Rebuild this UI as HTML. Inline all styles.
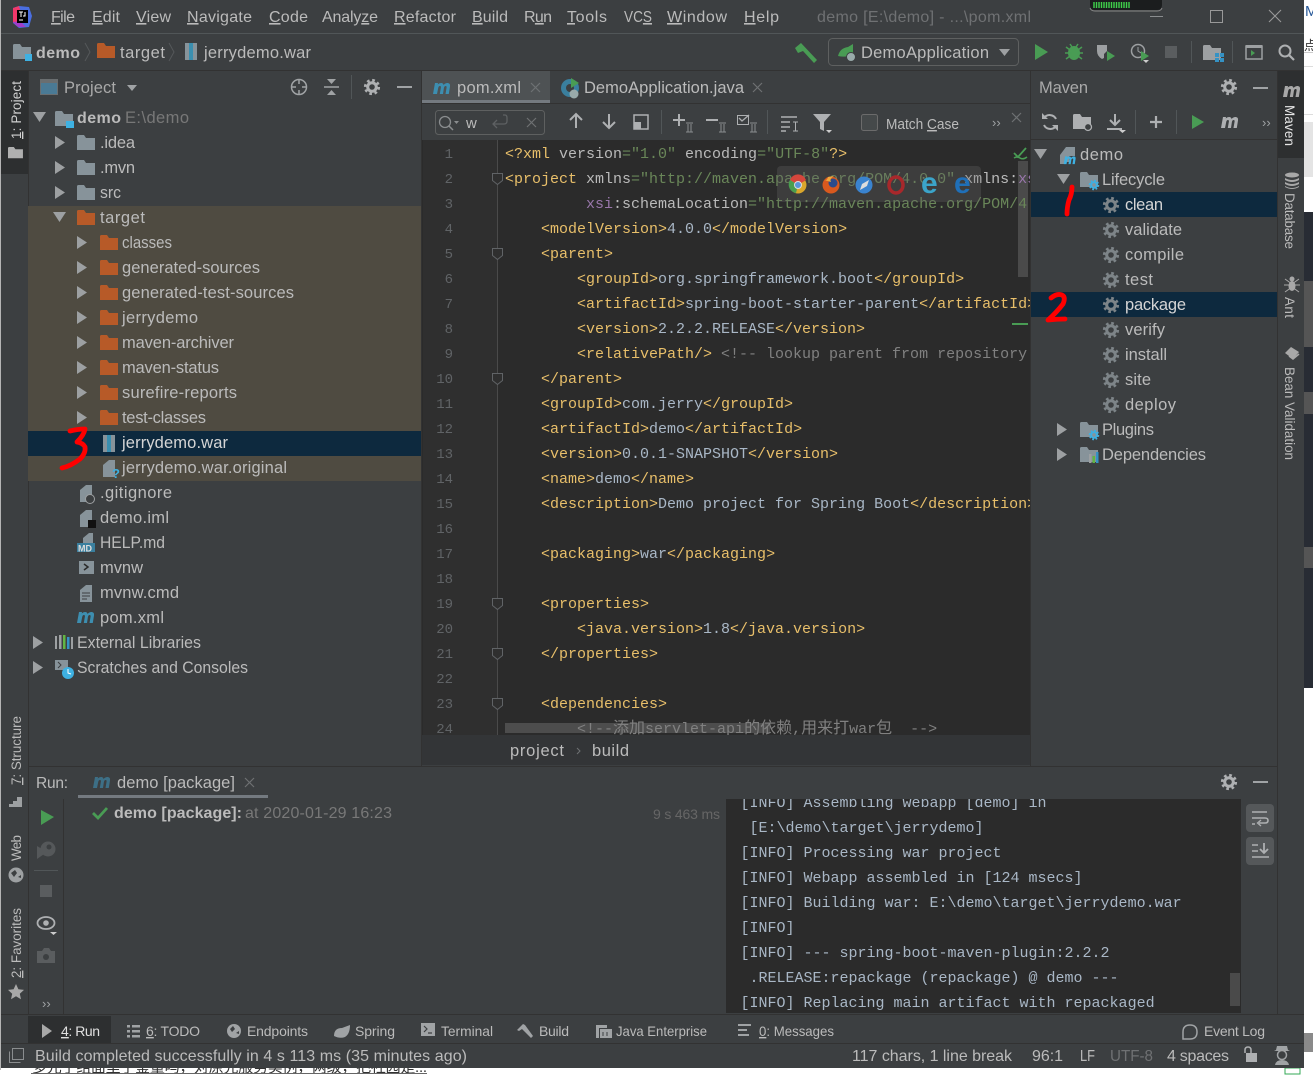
<!DOCTYPE html>
<html><head><meta charset="utf-8"><title>demo pom.xml</title>
<style>
html,body{margin:0;padding:0;background:#fff;width:1313px;height:1075px;overflow:hidden}
svg{display:block}
text{font-family:"Liberation Sans","Noto Sans CJK SC",sans-serif;fill:#bbb;font-size:16.5px;white-space:pre}
.m text,text.m{font-size:16px}
.b text{font-size:14px}
.s text{font-size:16px}
.c text{font-family:"Liberation Mono","Noto Sans CJK SC",monospace;font-size:15px;fill:#a9b7c6}
.n text{font-family:"Liberation Mono",monospace;font-size:14px;fill:#606366;text-anchor:end}
.v text{font-size:13.4px}
.tg,.c text.tg{fill:#e8bf6a}.at{fill:#bababa}.st{fill:#6a8759}.cm,.c text.cm{fill:#808080}.ns{fill:#9876aa}
.z{font-size:16px}
.u{text-decoration:underline}
</style></head><body>
<svg width="1313" height="1075" viewBox="0 0 1313 1075" xmlns="http://www.w3.org/2000/svg">
<defs>
<path id="fo" d="M0 1.5q0-1.500 1.500-1.500h5.500l2 3h9v12h-18z"/>
<g id="gear"><circle r="4.300" fill="none" stroke="currentColor" stroke-width="3"/><circle r="6.600" fill="none" stroke="currentColor" stroke-width="3" stroke-dasharray="2.600 2.580"/></g>
<path id="tr" d="M0 0L10 6.500L0 13z" fill="#9da0a2"/>
<path id="td" d="M0 0h13L6.500 10z" fill="#9da0a2"/>
<path id="mm" d="M1 13L3 2h3l-.3 1.500Q7.500 1.700 9.500 2q1.800.3 2 2 2-2.200 4.300-2 2.700.3 2.200 3.500L16.800 13h-3.300l1.100-6.500q.2-1.500-1-1.500-1.300 0-1.700 2L11 13H7.800l1.100-6.500q.2-1.500-1-1.500-1.300 0-1.700 2L5 13z"/>
<path id="x" d="M0 0L9 9M9 0L0 9" fill="none" stroke="currentColor" stroke-width="1.200"/>
<clipPath id="cc"><rect x="498" y="140" width="532" height="595"/></clipPath>
<clipPath id="cn"><rect x="423" y="140" width="60" height="595"/></clipPath>
<clipPath id="co"><rect x="726" y="799" width="503" height="214"/></clipPath>
</defs>

<!-- background behind the window -->
<rect width="1313" height="1075" fill="#fff"/>
<rect x="1304" y="52" width="9" height="1" fill="#ccc"/>
<rect x="1304" y="66" width="9" height="1" fill="#ddd"/>
<rect x="1304" y="114" width="9" height="1" fill="#ddd"/>
<rect x="1304" y="122" width="9" height="55" fill="#e4e4e4"/>
<rect x="1304" y="212" width="9" height="476" fill="#282c34"/>
<rect x="1304" y="281" width="9" height="66" fill="#555"/>
<rect x="1304" y="392" width="9" height="22" fill="#555"/>
<rect x="1304" y="547" width="9" height="21" fill="#555"/>
<rect x="1304" y="1033" width="9" height="19" fill="#8a8a8a"/>
<text x="1305" y="16" style="font-size:15px;fill:#2a5a9a">M</text>
<text x="1304" y="50" style="font-size:13px;fill:#333">点</text>
<text x="32" y="1072" textLength="395" style="font-size:15px;fill:#333">多元了组面里子鉴量吗，对原先服务实例，两级，把社园是...</text>
<rect x="31" y="1073" width="396" height="1" fill="#666"/>
<rect x="1285" y="1068" width="15" height="6" fill="none" stroke="#3a5" stroke-width="1"/>

<!-- window -->
<rect x="0" y="0" width="1" height="1070" fill="#b5b5b5"/>
<rect x="1" y="0" width="1303" height="1068" fill="#3c3f41"/>
<rect x="1" y="33" width="1303" height="1" fill="#515658"/>
<rect x="1" y="70" width="1303" height="1" fill="#323232"/>
<rect x="28" y="71" width="1" height="943" fill="#323232"/>
<rect x="1277" y="71" width="1" height="943" fill="#323232"/>

<!-- logo -->
<path d="M13 8l6-2 10 1 3 9-3 11-10 1-6-5z" fill="#4a6ee0"/>
<path d="M13 8l6-2 3 10-6 9-3-3z" fill="#f0386b"/>
<path d="M13 22l5 5h8l-6-6z" fill="#a03cc8"/>
<rect x="17" y="10" width="11" height="13" fill="#000"/>
<path d="M19 12h4M21 12v5M25 12v4h-2M19 20h4" stroke="#fff" stroke-width="1" fill="none"/>

<!-- menu -->
<g class="m">
<text x="51" y="22" textLength="24"><tspan class="u">F</tspan>ile</text>
<text x="92" y="22" textLength="28"><tspan class="u">E</tspan>dit</text>
<text x="136" y="22" textLength="35"><tspan class="u">V</tspan>iew</text>
<text x="187" y="22" textLength="65"><tspan class="u">N</tspan>avigate</text>
<text x="269" y="22" textLength="39"><tspan class="u">C</tspan>ode</text>
<text x="322" y="22" textLength="56">Analy<tspan class="u">z</tspan>e</text>
<text x="394" y="22" textLength="62"><tspan class="u">R</tspan>efactor</text>
<text x="472" y="22" textLength="36"><tspan class="u">B</tspan>uild</text>
<text x="524" y="22" textLength="28">R<tspan class="u">u</tspan>n</text>
<text x="567" y="22" textLength="40"><tspan class="u">T</tspan>ools</text>
<text x="624" y="22" textLength="28" lengthAdjust="spacingAndGlyphs">VC<tspan class="u">S</tspan></text>
<text x="667" y="22" textLength="60"><tspan class="u">W</tspan>indow</text>
<text x="744" y="22" textLength="35"><tspan class="u">H</tspan>elp</text>
<text x="817" y="22" textLength="214" style="fill:#6f7173">demo [E:\demo] - ...\pom.xml</text>
</g>
<!-- window controls -->
<path d="M1090 0h72v5q0 5-5 5h-62q-5 0-5-5z" fill="#1b1d1e"/>
<path d="M1090 8q1 3 5 3h62q4 0 5-3" fill="none" stroke="#888" stroke-width="1"/>
<path d="M1094 2v6M1096.500 2v6M1099 2v6M1101.500 2v6M1104 2v6M1106.500 2v6M1109 2v6M1111.500 2v6M1114 2v6M1116.500 2v6M1119 2v6M1121.500 2v6M1124 2v6M1126.500 2v6M1129 2v6" stroke="#3fd14b" stroke-width="1.400"/>
<rect x="1150" y="16" width="13" height="1" fill="#8a8d8f"/>
<rect x="1210.500" y="10.500" width="12" height="12" fill="none" stroke="#999" stroke-width="1"/>
<path d="M1269 10l12 12M1281 10l-12 12" stroke="#999" stroke-width="1.100"/>

<!-- nav bar -->
<use href="#fo" x="13" y="44" fill="#87939a"/>
<rect x="25" y="54" width="7" height="7" fill="#3eb1e2"/>
<text x="36" y="58" textLength="44" style="font-weight:700;font-size:16px">demo</text>
<path d="M85 43l5 9-5 9" fill="none" stroke="#55585a"/>
<use href="#fo" x="97" y="43" fill="#b75a28"/>
<text x="120" y="58" textLength="45">target</text>
<path d="M169 43l5 9-5 9" fill="none" stroke="#55585a"/>
<rect x="185" y="43" width="12" height="17" fill="#87939a"/><rect x="189" y="43" width="4" height="17" fill="#3a8fb0"/>
<text x="204" y="58" textLength="107">jerrydemo.war</text>

<!-- top toolbar -->
<path d="M795 48l6-5 16 17-3 3-11-12-5 2z" fill="#499c54"/>
<rect x="828.500" y="38.500" width="190" height="27" rx="4" fill="none" stroke="#5e6060"/>
<path d="M838 56q2-8 10-9l5-3v10q-6 4-15 2z" fill="#499c54"/><circle cx="851" cy="57" r="4.500" fill="#9aa" stroke="#3c3f41"/>
<text x="861" y="58" textLength="128">DemoApplication</text>
<path d="M999 49h11l-5.500 7z" fill="#9da0a2"/>
<path d="M1035 44l13 8-13 8z" fill="#499c54"/>
<ellipse cx="1074" cy="53" rx="6" ry="7" fill="#499c54"/><path d="M1066 47l16 12M1082 47l-16 12M1065 53h18M1070 44l2 3M1078 44l-2 3" stroke="#499c54" stroke-width="1.500"/>
<path d="M1097 45h10v6l-3 3v4l-2 1q-5-3-5-8z" fill="#9da0a2"/><path d="M1107 51l8 5-8 5z" fill="#499c54"/>
<circle cx="1138" cy="51" r="6.500" fill="none" stroke="#9da0a2" stroke-width="1.500"/><path d="M1138 47v4l3 2" stroke="#9da0a2" fill="none"/><path d="M1141 51l8 5-8 5z" fill="#499c54"/><path d="M1143 60h6l-3 3z" fill="#ccc"/>
<rect x="1165" y="46" width="12" height="12" fill="#5a5d5f"/>
<rect x="1191" y="41" width="1" height="22" fill="#515658"/>
<rect x="1232" y="41" width="1" height="22" fill="#515658"/>
<use href="#fo" x="1203" y="45" fill="#9da0a2"/><path d="M1215 53h4v4h-4zM1220 53h4v4h-4zM1215 58h4v4h-4zM1220 58h4v4h-4z" fill="#3592c4"/>
<rect x="1246" y="46" width="16" height="13" fill="none" stroke="#9da0a2" stroke-width="1.500"/><rect x="1246" y="45" width="16" height="3" fill="#9da0a2"/><path d="M1251 50l4 3-4 3z" fill="#499c54"/>
<circle cx="1285" cy="51" r="5.500" fill="none" stroke="#aeb0b2" stroke-width="2"/><path d="M1289 55l5 5" stroke="#aeb0b2" stroke-width="2.200"/>

<!-- left stripe -->
<rect x="1" y="71" width="27" height="103" fill="#2d2f30"/>
<g class="v">
<text transform="translate(21,139) rotate(-90)" textLength="58" style="fill:#d0d0d0"><tspan class="u">1</tspan>: Project</text>
<text transform="translate(21,785) rotate(-90)" textLength="69"><tspan class="u">7</tspan>: Structure</text>
<text transform="translate(21,861) rotate(-90)" textLength="26">Web</text>
<text transform="translate(21,978) rotate(-90)" textLength="70"><tspan class="u">2</tspan>: Favorites</text>
</g>
<use href="#fo" fill="#b0b0b0" transform="translate(8 147) scale(.83 .75)"/>
<path d="M9 807v-3h4v-3h4v-4h5v10z" fill="#9da0a2"/>
<circle cx="16" cy="875" r="7.500" fill="#9da0a2"/><path d="M11 873l4-3 2 3-3 4zM18 877l3-2v3z" fill="#3c3f41"/>
<path d="M16 984l2.400 5.300 5.600.6-4.200 3.800 1.200 5.500-5-2.900-5 2.900 1.200-5.500-4.200-3.800 5.600-.6z" fill="#a8a8a8"/>

<!-- project panel -->
<rect x="40.500" y="79.500" width="17" height="15" fill="#4a7a95" stroke="#6a6e70"/><rect x="41" y="80" width="16" height="3" fill="#6a6e70"/>
<text x="64" y="93" textLength="52" style="fill:#a9a9a9">Project</text>
<path d="M127 85h10l-5 6z" fill="#a0a3a5"/>
<circle cx="299" cy="87" r="7.500" fill="none" stroke="#a0a3a5" stroke-width="1.500"/><path d="M299 79v5M299 90v5M291 87h5M302 87h5" stroke="#a0a3a5" stroke-width="1.500"/>
<path d="M324 87h15" stroke="#a0a3a5" stroke-width="1.500"/><path d="M327 79h9l-4.500 5zM327 95h9l-4.500-5z" fill="#a0a3a5"/>
<rect x="351" y="75" width="1" height="24" fill="#515658"/>
<use href="#gear" x="372" y="87" color="#aeb0b2"/>
<rect x="397" y="86" width="15" height="2" fill="#a0a3a5"/>

<!-- highlights -->
<rect x="28" y="206" width="393" height="225" fill="#4f4b41"/>
<rect x="28" y="456" width="393" height="25" fill="#4f4b41"/>
<rect x="28" y="431" width="393" height="25" fill="#0d293e"/>

<!-- tree arrows -->
<use href="#td" x="33" y="112"/>
<use href="#tr" x="55" y="136"/><use href="#tr" x="55" y="161"/><use href="#tr" x="55" y="186"/>
<use href="#td" x="53" y="212"/>
<use href="#tr" x="77" y="236"/><use href="#tr" x="77" y="261"/><use href="#tr" x="77" y="286"/><use href="#tr" x="77" y="311"/><use href="#tr" x="77" y="336"/><use href="#tr" x="77" y="361"/><use href="#tr" x="77" y="386"/><use href="#tr" x="77" y="411"/>
<use href="#tr" x="33" y="636"/><use href="#tr" x="33" y="661"/>

<!-- tree icons -->
<use href="#fo" x="55" y="111" fill="#87939a"/><rect x="66" y="121" width="8" height="7" fill="#3eb1e2"/>
<use href="#fo" x="77" y="135" fill="#87939a"/><use href="#fo" x="77" y="160" fill="#87939a"/><use href="#fo" x="77" y="185" fill="#87939a"/>
<use href="#fo" x="77" y="210" fill="#b75a28"/>
<g fill="#b75a28"><use href="#fo" x="100" y="235"/><use href="#fo" x="100" y="260"/><use href="#fo" x="100" y="285"/><use href="#fo" x="100" y="310"/><use href="#fo" x="100" y="335"/><use href="#fo" x="100" y="360"/><use href="#fo" x="100" y="385"/><use href="#fo" x="100" y="410"/></g>
<rect x="103" y="435" width="12" height="17" fill="#87939a"/><rect x="107" y="435" width="4" height="17" fill="#3a8fb0"/>
<path d="M103 465l6-5h6v17h-12z" fill="#87939a"/>
<text x="112" y="478" style="font-weight:700;fill:#3eb1e2;font-size:13px">?</text>
<path d="M80 490l6-5h6v17h-12z" fill="#87939a"/><circle cx="90" cy="499" r="4.500" fill="#3c3f41" stroke="#9da0a2"/>
<path d="M80 515l6-5h6v17h-12z" fill="#87939a"/><rect x="88" y="520" width="8" height="8" fill="#111"/>
<path d="M83 538l6-5h4v10h-10z" fill="#87939a"/><rect x="77" y="543" width="18" height="9" fill="#3a7f9e"/>
<text x="78" y="551.500" style="font-size:9px;font-weight:700;fill:#ddd">MD</text>
<rect x="79" y="561" width="15" height="13" fill="#87939a"/><path d="M84 564l4 3-4 3" fill="none" stroke="#2b2b2b" stroke-width="1.500"/>
<path d="M80 590l6-5h6v17h-12z" fill="#87939a"/><path d="M82 593h8M82 596h8M82 599h5" stroke="#3c3f41"/>
<use href="#mm" x="76" y="610" fill="#3d8eb0"/>
<path d="M55 636h2v13h-2z" fill="#9da0a2"/><path d="M59 635h2.500v14H59z" fill="#9da0a2"/><path d="M63 635h2.500v14H63z" fill="#62b543"/><path d="M67 637h2.500v12H67z" fill="#3592c4"/><path d="M71 637h2v12h-2z" fill="#9da0a2"/>
<path d="M55 660h13v10H55z" fill="#87939a"/><path d="M58 662l3 3-3 3" fill="none" stroke="#3c3f41"/><circle cx="68" cy="673" r="6" fill="#3eb1e2"/><path d="M68 669v4l3 1" stroke="#fff" fill="none"/>

<!-- tree labels -->
<g>
<text x="77" y="123" textLength="44" style="font-weight:700;font-size:16px">demo</text><text x="125" y="123" textLength="64" style="fill:#787878">E:\demo</text>
<text x="100" y="148" textLength="35">.idea</text><text x="100" y="173" textLength="35">.mvn</text><text x="100" y="198" textLength="21" lengthAdjust="spacingAndGlyphs">src</text><text x="100" y="223" textLength="45">target</text>
<text x="122" y="248" textLength="50" lengthAdjust="spacingAndGlyphs">classes</text><text x="122" y="273" textLength="138">generated-sources</text><text x="122" y="298" textLength="172">generated-test-sources</text><text x="122" y="323" textLength="76">jerrydemo</text><text x="122" y="348" textLength="112">maven-archiver</text><text x="122" y="373" textLength="97">maven-status</text><text x="122" y="398" textLength="115">surefire-reports</text><text x="122" y="423" textLength="84">test-classes</text>
<text x="122" y="448" textLength="106" style="fill:#d5d5d5">jerrydemo.war</text><text x="122" y="473" textLength="165">jerrydemo.war.original</text>
<text x="100" y="498" textLength="72">.gitignore</text><text x="100" y="523" textLength="69">demo.iml</text><text x="100" y="548" textLength="65" lengthAdjust="spacingAndGlyphs">HELP.md</text><text x="100" y="573" textLength="43">mvnw</text><text x="100" y="598" textLength="79">mvnw.cmd</text><text x="100" y="623" textLength="64">pom.xml</text>
<text x="77" y="648" textLength="124" lengthAdjust="spacingAndGlyphs">External Libraries</text><text x="77" y="673" textLength="171" lengthAdjust="spacingAndGlyphs">Scratches and Consoles</text>
</g>

<!-- editor tabs -->
<rect x="421" y="71" width="1" height="695" fill="#323232"/>
<rect x="1030" y="71" width="1" height="695" fill="#323232"/>
<rect x="422" y="71" width="128" height="33" fill="#4e5254"/>
<rect x="422" y="100" width="128" height="4" fill="#747a80"/>
<rect x="422" y="103" width="608" height="1" fill="#323232"/>
<use href="#mm" x="432" y="81" fill="#3d8eb0"/>
<text x="457" y="93" textLength="64">pom.xml</text>
<use href="#x" x="531" y="83" color="#6e7173"/>
<circle cx="570" cy="88" r="9" fill="#3a7f9e"/><circle cx="570" cy="88" r="4" fill="#3c3f41"/><path d="M571 78l8 5-8 5z" fill="#499c54"/><circle cx="574" cy="94" r="4.500" fill="#9aa"/>
<text x="584" y="93" textLength="160">DemoApplication.java</text>
<use href="#x" x="753" y="83" color="#6e7173"/>

<!-- find bar -->
<rect x="422" y="104" width="608" height="36" fill="#3c3f41"/>
<rect x="435.500" y="110.500" width="109" height="24" rx="3" fill="none" stroke="#5e6060"/>
<circle cx="445" cy="122" r="5.500" fill="none" stroke="#8a8d8f" stroke-width="1.300"/><path d="M449 126l4 4" stroke="#8a8d8f" stroke-width="1.500"/><path d="M454 121h5l-2.500 3z" fill="#8a8d8f"/>
<text x="466" y="128" style="font-size:15px">w</text>
<path d="M503 115h2q2 0 2 3v3q0 3-3 3h-10M497 120l-4 4 4 4" fill="none" stroke="#5e6163" stroke-width="1.300"/>
<use href="#x" x="527" y="118" color="#6e7173"/>
<path d="M576 128v-14M570 120l6-6 6 6" fill="none" stroke="#aeb0b2" stroke-width="2"/>
<path d="M609 114v14M603 122l6 6 6-6" fill="none" stroke="#aeb0b2" stroke-width="2"/>
<rect x="634" y="115" width="14" height="14" fill="none" stroke="#aeb0b2" stroke-width="1.500"/><rect x="634" y="122" width="7" height="7" fill="#aeb0b2"/>
<rect x="661" y="110" width="1" height="24" fill="#515658"/><rect x="767" y="110" width="1" height="24" fill="#515658"/>
<path d="M673 120h12M679 114v12" stroke="#aeb0b2" stroke-width="2"/><path d="M686 123h7M686 132h7M688 124v8M691 124v8" stroke="#8a8d8f"/>
<path d="M706 120h12" stroke="#aeb0b2" stroke-width="2"/><path d="M719 123h7M719 132h7M721 124v8M724 124v8" stroke="#8a8d8f"/>
<rect x="737.500" y="115.500" width="11" height="9" fill="none" stroke="#aeb0b2"/><path d="M739 118l3 3 7-6" fill="none" stroke="#aeb0b2" stroke-width="1.300"/><path d="M750 123h7M750 132h7M752 124v8M755 124v8" stroke="#8a8d8f"/>
<path d="M781 117h16M781 122h9M781 127h9M781 131h5" stroke="#aeb0b2" stroke-width="1.500"/><path d="M793 122h5M795.500 122v9M793 131h5" stroke="#aeb0b2"/>
<path d="M813 114h18l-7 8v9l-4-2v-7z" fill="#aeb0b2"/><path d="M826 130h6l-3 3z" fill="#ccc"/>
<rect x="861.500" y="114.500" width="16" height="16" rx="2" fill="#45494a" stroke="#6b6b6b"/>
<text x="886" y="129" textLength="73" lengthAdjust="spacingAndGlyphs" style="font-size:14.500px">Match <tspan class="u">C</tspan>ase</text>
<text x="992" y="127" style="font-size:13px;fill:#a0a3a5">››</text>
<use href="#x" x="1012" y="113" color="#6e7173"/>

<!-- editor -->
<rect x="422" y="140" width="608" height="595" fill="#2b2b2b"/>
<rect x="423" y="140" width="74" height="595" fill="#2f2f2f"/>
<rect x="497" y="140" width="1" height="595" fill="#4a4a4a"/>
<rect x="1018" y="161" width="10" height="116" fill="#4a4a4a"/>
<rect x="505" y="723" width="265" height="10" fill="#4d4d4d"/>
<g class="n" clip-path="url(#cn)">
<text x="453" y="158">1</text><text x="453" y="183">2</text><text x="453" y="208">3</text><text x="453" y="233">4</text><text x="453" y="258">5</text><text x="453" y="283">6</text><text x="453" y="308">7</text><text x="453" y="333">8</text><text x="453" y="358">9</text><text x="453" y="383">10</text><text x="453" y="408">11</text><text x="453" y="433">12</text><text x="453" y="458">13</text><text x="453" y="483">14</text><text x="453" y="508">15</text><text x="453" y="533">16</text><text x="453" y="558">17</text><text x="453" y="583">18</text><text x="453" y="608">19</text><text x="453" y="633">20</text><text x="453" y="658">21</text><text x="453" y="683">22</text><text x="453" y="708">23</text><text x="453" y="733">24</text>
</g>
<g fill="#2f2f2f" stroke="#606366">
<path d="M492.500 173.500h10v7l-5 4-5-4z"/><path d="M492.500 248.500h10v7l-5 4-5-4z"/><path d="M492.500 373.500h10v7l-5 4-5-4z"/><path d="M492.500 598.500h10v7l-5 4-5-4z"/><path d="M492.500 648.500h10v7l-5 4-5-4z"/><path d="M492.500 698.500h10v7l-5 4-5-4z"/>
</g>
<g class="c" clip-path="url(#cc)">
<text x="505" y="158"><tspan class="tg">&lt;?xml </tspan><tspan class="at">version</tspan><tspan class="st">="1.0" </tspan><tspan class="at">encoding</tspan><tspan class="st">="UTF-8"</tspan><tspan class="tg">?&gt;</tspan></text>
<text x="505" y="183"><tspan class="tg">&lt;project </tspan><tspan class="at">xmlns</tspan><tspan class="st">="http://maven.apache.org/POM/4.0.0" </tspan><tspan class="at">xmlns:</tspan><tspan class="ns">xsi</tspan></text>
<text x="586" y="208"><tspan class="ns">xsi</tspan><tspan class="at">:schemaLocation</tspan><tspan class="st">="http://maven.apache.org/POM/4.0.0</tspan></text>
<text x="541" y="233"><tspan class="tg">&lt;modelVersion&gt;</tspan>4.0.0<tspan class="tg">&lt;/modelVersion&gt;</tspan></text>
<text x="541" y="258" class="tg">&lt;parent&gt;</text>
<text x="577" y="283"><tspan class="tg">&lt;groupId&gt;</tspan>org.springframework.boot<tspan class="tg">&lt;/groupId&gt;</tspan></text>
<text x="577" y="308"><tspan class="tg">&lt;artifactId&gt;</tspan>spring-boot-starter-parent<tspan class="tg">&lt;/artifactId&gt;</tspan></text>
<text x="577" y="333"><tspan class="tg">&lt;version&gt;</tspan>2.2.2.RELEASE<tspan class="tg">&lt;/version&gt;</tspan></text>
<text x="577" y="358"><tspan class="tg">&lt;relativePath/&gt; </tspan><tspan class="cm">&lt;!-- lookup parent from repository --&gt;</tspan></text>
<text x="541" y="383" class="tg">&lt;/parent&gt;</text>
<text x="541" y="408"><tspan class="tg">&lt;groupId&gt;</tspan>com.jerry<tspan class="tg">&lt;/groupId&gt;</tspan></text>
<text x="541" y="433"><tspan class="tg">&lt;artifactId&gt;</tspan>demo<tspan class="tg">&lt;/artifactId&gt;</tspan></text>
<text x="541" y="458"><tspan class="tg">&lt;version&gt;</tspan>0.0.1-SNAPSHOT<tspan class="tg">&lt;/version&gt;</tspan></text>
<text x="541" y="483"><tspan class="tg">&lt;name&gt;</tspan>demo<tspan class="tg">&lt;/name&gt;</tspan></text>
<text x="541" y="508"><tspan class="tg">&lt;description&gt;</tspan>Demo project for Spring Boot<tspan class="tg">&lt;/description&gt;</tspan></text>
<text x="541" y="558"><tspan class="tg">&lt;packaging&gt;</tspan>war<tspan class="tg">&lt;/packaging&gt;</tspan></text>
<text x="541" y="608" class="tg">&lt;properties&gt;</text>
<text x="577" y="633"><tspan class="tg">&lt;java.version&gt;</tspan>1.8<tspan class="tg">&lt;/java.version&gt;</tspan></text>
<text x="541" y="658" class="tg">&lt;/properties&gt;</text>
<text x="541" y="708" class="tg">&lt;dependencies&gt;</text>
<text x="577" y="733" class="cm">&lt;!--<tspan class="z">添加</tspan>servlet-api<tspan class="z">的依赖</tspan>,<tspan class="z">用来打</tspan>war<tspan class="z">包</tspan>  --&gt;</text>
</g>
<path d="M1014 153l4 4 8-9" fill="none" stroke="#499c54" stroke-width="1.800"/><path d="M1014 158q3-2 6 0t7-1" fill="none" stroke="#499c54" stroke-width="1.500"/>
<rect x="1012" y="323" width="16" height="2" fill="#499c54"/>

<!-- browser bubble -->
<rect x="777" y="166" width="204" height="36" rx="4" fill="#666" fill-opacity=".3"/>
<circle cx="798" cy="185" r="8.500" fill="#d9a62c"/><path d="M798 185L790 180A8.500 8.500 0 0 1 806 180z" fill="#d5463c"/><path d="M798 185l-8-5a8.500 8.500 0 0 0 6 13z" fill="#4a9e4f"/><circle cx="798" cy="185" r="3.500" fill="#5a95d8" stroke="#ddd"/>
<circle cx="831" cy="185" r="8.500" fill="#d9591e"/><circle cx="833" cy="183" r="4.500" fill="#2b4b8c"/><path d="M824 180q3 1 4-3l6-1q-5 3-3 6z" fill="#eea83c"/>
<circle cx="864" cy="185" r="8.500" fill="#3a83cf"/><path d="M869 180l-7 4-2 6 7-4z" fill="#ddd"/>
<ellipse cx="896" cy="185" rx="7" ry="8" fill="none" stroke="#a8282b" stroke-width="3.500"/>
<text x="921" y="193" style="font-size:30px;font-weight:700;fill:#3ba4c9">e</text>
<text x="954" y="193" style="font-size:30px;font-weight:700;fill:#1f6fb8">e</text>

<!-- breadcrumbs -->
<rect x="422" y="735" width="608" height="30" fill="#333537"/>
<text x="510" y="756" textLength="54">project</text>
<path d="M577 748l3 3-3 3" fill="none" stroke="#6e7173"/>
<text x="592" y="756" textLength="37">build</text>

<!-- maven panel -->
<text x="1039" y="93" textLength="49" style="fill:#a9a9a9">Maven</text>
<use href="#gear" x="1229" y="87" color="#aeb0b2"/>
<rect x="1253" y="87" width="15" height="2" fill="#a0a3a5"/>
<rect x="1031" y="139" width="246" height="1" fill="#323232"/>
<path d="M1056 119a7 7 0 0 0-12-1M1044 125a7 7 0 0 0 12 1" fill="none" stroke="#aeb0b2" stroke-width="2"/><path d="M1042 113v6h6zM1058 131v-6h-6z" fill="#aeb0b2"/>
<use href="#fo" x="1073" y="114" fill="#aeb0b2"/><circle cx="1088" cy="127" r="3.500" fill="#3c3f41" stroke="#aeb0b2" stroke-width="1.300"/>
<path d="M1115 114v11M1110 120l5 5 5-5" fill="none" stroke="#aeb0b2" stroke-width="2"/><path d="M1107 129h15" stroke="#aeb0b2" stroke-width="2"/><path d="M1119 130h7l-3.500 3z" fill="#ccc"/>
<rect x="1135" y="110" width="1" height="24" fill="#515658"/><rect x="1176" y="110" width="1" height="24" fill="#515658"/>
<path d="M1150 122h12M1156 116v12" stroke="#aeb0b2" stroke-width="2.200"/>
<path d="M1192 115l12 7-12 7z" fill="#499c54"/>
<use href="#mm" x="1220" y="115" fill="#aeb0b2"/>
<text x="1262" y="127" style="font-size:13px;fill:#a0a3a5">››</text>

<rect x="1031" y="192" width="246" height="25" fill="#0d293e"/>
<rect x="1031" y="292" width="246" height="25" fill="#0d293e"/>
<use href="#td" x="1034" y="149"/>
<use href="#td" x="1057" y="174"/>
<use href="#tr" x="1057" y="423"/><use href="#tr" x="1057" y="448"/>
<path d="M1060 155l6-8h9v9h-6v6h-3v2h-6z" fill="#87939a"/><use href="#mm" fill="#3eb1e2" transform="translate(1063 155) scale(.7)"/>
<use href="#fo" x="1080" y="172" fill="#87939a"/><use href="#gear" transform="translate(1094 185) scale(.65)" color="#3eb1e2"/>
<use href="#fo" x="1080" y="422" fill="#87939a"/><use href="#gear" transform="translate(1094 435) scale(.65)" color="#3eb1e2"/>
<use href="#fo" x="1080" y="447" fill="#87939a"/><path d="M1089 454h2.500v9H1089z" fill="#9da0a2"/><path d="M1092.500 456h2.500v7h-2.500z" fill="#62b543"/><path d="M1096 452h2.500v11H1096z" fill="#3592c4"/>
<g color="#7d8488"><use href="#gear" x="1111" y="205"/><use href="#gear" x="1111" y="230"/><use href="#gear" x="1111" y="255"/><use href="#gear" x="1111" y="280"/><use href="#gear" x="1111" y="305"/><use href="#gear" x="1111" y="330"/><use href="#gear" x="1111" y="355"/><use href="#gear" x="1111" y="380"/><use href="#gear" x="1111" y="405"/></g>
<text x="1080" y="160" textLength="43">demo</text><text x="1102" y="185" textLength="63">Lifecycle</text>
<text x="1125" y="210" textLength="38" style="fill:#d5d5d5">clean</text><text x="1125" y="235" textLength="57">validate</text><text x="1125" y="260" textLength="59">compile</text><text x="1125" y="285" textLength="28">test</text><text x="1125" y="310" textLength="61" style="fill:#d5d5d5">package</text><text x="1125" y="335" textLength="40">verify</text><text x="1125" y="360" textLength="42">install</text><text x="1125" y="385" textLength="26">site</text><text x="1125" y="410" textLength="51">deploy</text>
<text x="1102" y="435" textLength="52">Plugins</text><text x="1102" y="460" textLength="104">Dependencies</text>

<!-- right stripe -->
<rect x="1278" y="71" width="26" height="87" fill="#2d2f30"/>
<use href="#mm" x="1282" y="84" fill="#a8a8a8"/>
<g class="v">
<text transform="translate(1285,105) rotate(90)" textLength="41" style="fill:#e6e6e6">Maven</text>
<text transform="translate(1285,193) rotate(90)" textLength="56">Database</text>
<text transform="translate(1285,297) rotate(90)" textLength="21">Ant</text>
<text transform="translate(1285,367) rotate(90)" textLength="93">Bean Validation</text>
</g>
<ellipse cx="1292" cy="175" rx="7" ry="2.500" fill="#a8a8a8"/><path d="M1285 178q7 4 14 0v2q-7 4-14 0zM1285 182q7 4 14 0v2q-7 4-14 0zM1285 186q7 4 14 0v1q-7 4-14 0z" fill="#a8a8a8"/>
<ellipse cx="1292" cy="286" rx="3.500" ry="5" fill="#a8a8a8"/><circle cx="1292" cy="279" r="2.500" fill="#a8a8a8"/><path d="M1285 279l7 5 7-5M1284 285h16M1285 292l7-5 7 5" stroke="#a8a8a8" fill="none"/>
<path d="M1285 353l6-6 8 5-6 7z" fill="#a8a8a8"/><path d="M1289 356l4 3 6-5" stroke="#a8a8a8" stroke-width="1.500" fill="none"/>

<!-- run panel -->
<rect x="29" y="766" width="1248" height="1" fill="#323232"/>
<text x="36" y="788" textLength="32" style="font-size:15.500px">Run:</text>
<use href="#mm" x="92" y="775" fill="#3d6f86"/>
<text x="117" y="788" textLength="118">demo [package]</text>
<use href="#x" x="245" y="778" color="#6e7173"/>
<rect x="78" y="795" width="190" height="3" fill="#747a80"/>
<use href="#gear" x="1229" y="782" color="#aeb0b2"/>
<rect x="1253" y="781" width="15" height="2" fill="#a0a3a5"/>
<rect x="63" y="799" width="1" height="215" fill="#323232"/>
<path d="M41 810l13 7-13 8z" fill="#499c54"/>
<path d="M37 846l10 6-10 7z" fill="#55585a"/><circle cx="48" cy="849" r="7.500" fill="#55585a"/><circle cx="49" cy="847" r="2.500" fill="#3c3f41"/>
<rect x="34" y="870" width="24" height="1" fill="#515658"/>
<rect x="40" y="885" width="12" height="12" fill="#5a5d5f"/>
<ellipse cx="46" cy="923" rx="8.500" ry="6" fill="none" stroke="#aeb0b2" stroke-width="1.800"/><circle cx="46" cy="923" r="2.800" fill="#aeb0b2"/><path d="M50 932h7l-3.500 3z" fill="#ccc"/>
<path d="M37 951h5l2-3h5l2 3h4v12H37z" fill="#5a5d5f"/><circle cx="46" cy="957" r="3" fill="#3c3f41"/>
<text x="42" y="1008" style="font-size:13px;fill:#a0a3a5">››</text>

<path d="M93 813l5 5 9-10" fill="none" stroke="#499c54" stroke-width="2.800"/>
<text x="114" y="818" textLength="128" style="font-weight:700;font-size:16px">demo [package]:</text>
<text x="245" y="818" textLength="147" style="fill:#787878;font-size:16px">at 2020-01-29 16:23</text>
<text x="653" y="819" textLength="67" style="font-size:14px;fill:#666">9 s 463 ms</text>

<rect x="726" y="799" width="515" height="214" fill="#2b2b2b"/>
<rect x="1230" y="973" width="10" height="33" fill="#4a4a4a"/>
<g class="c" clip-path="url(#co)">
<text x="740.500" y="807">[INFO] Assembling webapp [demo] in</text>
<text x="749.500" y="832">[E:\demo\target\jerrydemo]</text>
<text x="740.500" y="857">[INFO] Processing war project</text>
<text x="740.500" y="882">[INFO] Webapp assembled in [124 msecs]</text>
<text x="740.500" y="907">[INFO] Building war: E:\demo\target\jerrydemo.war</text>
<text x="740.500" y="932">[INFO]</text>
<text x="740.500" y="957">[INFO] --- spring-boot-maven-plugin:2.2.2</text>
<text x="749.500" y="982">.RELEASE:repackage (repackage) @ demo ---</text>
<text x="740.500" y="1007">[INFO] Replacing main artifact with repackaged</text>
</g>
<rect x="1246" y="804" width="28" height="28" rx="4" fill="#55585a"/>
<rect x="1246" y="837" width="28" height="28" rx="4" fill="#55585a"/>
<path d="M1252 812h15M1252 818h13q3 0 3 2.500t-3 2.500h-6M1252 824h3" fill="none" stroke="#aeb0b2" stroke-width="1.600"/><path d="M1261 820l-3.500 3 3.500 3" fill="none" stroke="#aeb0b2" stroke-width="1.300"/>
<path d="M1252 845h6M1252 851h6M1252 857h17" stroke="#aeb0b2" stroke-width="1.600"/><path d="M1264 843v10M1260 849l4 4 4-4" fill="none" stroke="#aeb0b2" stroke-width="1.800"/>

<!-- bottom strip -->
<rect x="1" y="1014" width="1303" height="1" fill="#323232"/>
<rect x="1" y="1043" width="1303" height="1" fill="#323232"/>
<rect x="28" y="1016" width="83" height="27" fill="#2d2f30"/>
<path d="M42 1024l10 7-10 7z" fill="#a8a8a8"/>
<g class="b">
<text x="61" y="1036" textLength="39" style="fill:#e0e0e0"><tspan class="u">4</tspan>: Run</text>
<text x="146" y="1036" textLength="54"><tspan class="u">6</tspan>: TODO</text>
<text x="247" y="1036" textLength="61">Endpoints</text>
<text x="355" y="1036" textLength="40">Spring</text>
<text x="441" y="1036" textLength="52" lengthAdjust="spacingAndGlyphs">Terminal</text>
<text x="539" y="1036" textLength="30">Build</text>
<text x="616" y="1036" textLength="91" lengthAdjust="spacingAndGlyphs">Java Enterprise</text>
<text x="759" y="1036" textLength="75" lengthAdjust="spacingAndGlyphs"><tspan class="u">0</tspan>: Messages</text>
<text x="1204" y="1036" textLength="61">Event Log</text>
</g>
<path d="M127 1025h3v2.500h-3zM127 1030h3v2.500h-3zM127 1035h3v2.500h-3zM132 1025h8v2.500h-8zM132 1030h8v2.500h-8zM132 1035h8v2.500h-8z" fill="#a0a3a5"/>
<circle cx="234" cy="1031" r="7" fill="#a0a3a5"/><path d="M230 1029l3-3 2 3-3 3zM236 1033l3-2v3z" fill="#3c3f41"/>
<path d="M334 1036q0-8 8-8l8-3q0 9-5 12-5 2-11-1z" fill="#a0a3a5"/>
<rect x="421" y="1023" width="14" height="13" fill="#a0a3a5"/><path d="M424 1026l3 3-3 3M428 1033h4" fill="none" stroke="#3c3f41" stroke-width="1.200"/>
<path d="M517 1030l6-6 2 1 8 11-2 2-9-9-3 2z" fill="#a0a3a5"/>
<path d="M596 1025h11v3h-8v10h-3z" fill="#a0a3a5"/><rect x="600" y="1029" width="12" height="9" fill="#a0a3a5"/><path d="M603 1032v4M607 1032v4" stroke="#3c3f41"/>
<path d="M738 1025h13M738 1030h9M738 1035h11" stroke="#a0a3a5" stroke-width="2"/>
<path d="M1183 1037v-5q0-7 7-7t7 7-7 7h-7z" fill="none" stroke="#a0a3a5" stroke-width="1.500"/>

<!-- status bar -->
<rect x="12.500" y="1048.500" width="11" height="11" fill="none" stroke="#8a8d8f"/><path d="M9.500 1051.500v11h11" fill="none" stroke="#8a8d8f"/>
<g class="s">
<text x="35" y="1061" textLength="432">Build completed successfully in 4 s 113 ms (35 minutes ago)</text>
<text x="852" y="1061" textLength="160">117 chars, 1 line break</text>
<text x="1032" y="1061" textLength="31">96:1</text>
<text x="1080" y="1061" textLength="15" lengthAdjust="spacingAndGlyphs">LF</text>
<text x="1110" y="1061" textLength="43" lengthAdjust="spacingAndGlyphs" style="fill:#6f7173">UTF-8</text>
<text x="1167" y="1061" textLength="62">4 spaces</text>
</g>
<rect x="1246" y="1053" width="11" height="9" fill="#aeb0b2"/><path d="M1245 1053v-3q0-3 3-3t3 3v3" fill="none" stroke="#aeb0b2" stroke-width="1.500"/>
<path d="M1276 1050l1-4h10l1 4 2 1h-16z" fill="#a0a3a5"/><circle cx="1282" cy="1055" r="4.500" fill="none" stroke="#a0a3a5" stroke-width="1.500"/><path d="M1275 1065q1-5 7-5t7 5z" fill="#a0a3a5"/>

<!-- red annotations -->
<g fill="none" stroke="#f00" stroke-width="4.800" stroke-linecap="round" stroke-linejoin="round">
<path d="M1072 187q0 7-3 13-2 7-2 14"/>
<path d="M1051 298q6-5 11-3 4 2 1 9-7 9-15 16 9-1 17-1"/>
<path d="M70 431q8-2 15-2-1 6-8 13 6 1 8 5 1 6-5 12-9 7-18 9"/>
</g>
</svg>
</body></html>
